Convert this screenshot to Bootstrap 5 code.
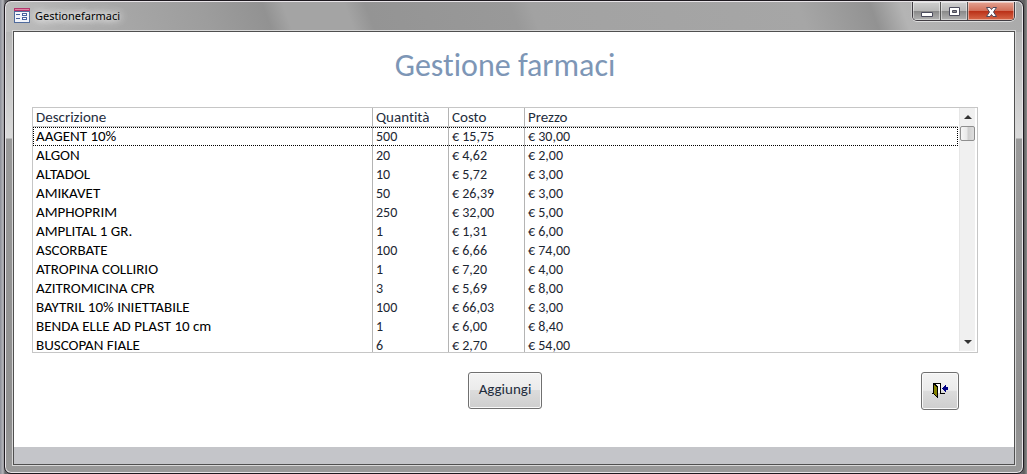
<!DOCTYPE html>
<html lang="it">
<head>
<meta charset="utf-8">
<meta name="viewport" content="width=device-width, initial-scale=1">
<title>Gestionefarmaci</title>
<link href="https://cdn.jsdelivr.net/npm/bootstrap@5.3.0/dist/css/bootstrap.min.css" rel="stylesheet">
<style>
body{background:linear-gradient(90deg,#8b8e98 0,#b5b5ba 3px,#66666a 5px,#66666a calc(100% - 5px),#5c5c5c calc(100% - 3px),#8a8a8a);font-family:Calibri,Carlito,Lato,sans-serif;font-size:15px;line-height:19px;color:#000;font-variant-ligatures:none}
.win{margin:0 3px 0 4px;border:1px solid #1e1a20;border-radius:7px;box-shadow:inset 0 0 0 1px #e8e4e8;padding:1px 8px 8px;
background:
 linear-gradient(180deg,transparent 31px,#b6b6b6 31px,#dadada 137px,#999 138px,#8f8f8f 420px,#999 100%) 0 0/14px 100% no-repeat,
 linear-gradient(180deg,transparent 31px,#b6b6b6 31px,#dadada 137px,#999 138px,#8f8f8f 420px,#999 100%) 100% 0/14px 100% no-repeat,
 linear-gradient(70deg,#bebebe 0,#a9a9a9 10%,#9d9d9d 20%,#929292 26%,#a4a4a4 28%,#a4a4a4 34%,#949494 36%,#999 50%,#9b9b9b 50.5%,#a2a2a2 52%,#a6a6a6 78%,#929292 85%,#b4b4b4 88%,#aaa 100%) 0 0/100% 32px no-repeat,
 #999}
.title-bar{height:29px}
.caption{font-family:"Noto Sans","Open Sans",sans-serif;font-size:11px;line-height:19px;padding-top:4px;padding-left:1px;gap:5px}
.caption span{text-shadow:0 0 6px #fff,0 0 10px #fff,0 0 14px #eee}
.win-buttons{height:19px;border:1px solid #403c42;border-top:0;border-radius:0 0 5px 5px;box-shadow:0 1px 0 #ddd,1px 0 0 #ddd,-1px 0 0 #ccc;overflow:hidden}
.win-buttons button{border:0;padding:0;width:27px;background:linear-gradient(#cfcfcf 0,#b8b8b8 48%,#888 50%,#b2b2b2 100%);box-shadow:inset 0 0 0 1px #ffffff70}
.win-buttons button+button{border-left:1px solid #555}
.win-buttons .win-close{width:47px;background:linear-gradient(#e3a292 0,#d2705a 48%,#b92f16 50%,#d8694a 100%)}
.win-buttons svg,.exit svg,.scroll svg{display:block;margin:auto}
.client{border:1px solid #505050;background:#fff;box-shadow:0 0 0 1px #d8d8d8}
.form-area{padding:15px 36px 37px 18px}
h1{font-size:32px;line-height:38px;color:#7d96b6;margin:0 0 22px;text-align:center;font-weight:400}
.list{height:246px;border:1px solid #c6c6c6;overflow:hidden}
.data{border-collapse:separate;border-spacing:0;table-layout:fixed;width:100%}
.data th,.data td{padding:0 3px;font-weight:400;white-space:nowrap}
.data th{color:#1f2d3d;border-bottom:1px solid #c6c6c6;line-height:18px}
.data td:not(:first-child){color:#1c2632;font-size:14px}
.data th+th,.data td+td{border-left:1px solid #b4b4b4}
.data .focused{outline:1px dotted #000;outline-offset:-1px}
.col-desc{width:339px}.col-num{width:76px}
.scroll{flex:0 0 16px;margin:0 2px 1px 1px;background:#f0f0f0;border-left:1px solid #e6e6e6}
.scroll button{border:0;background:none;padding:0;height:18px}
.thumb{height:15px;border:1px solid #8f8f8f;border-radius:2px;background:linear-gradient(90deg,#f6f6f6,#e9e9e9 45%,#cfcfcf 55%,#dedede)}
.actions{display:grid;grid-template-columns:1fr auto 1fr;padding:19px 19px 0 19px}
.face{height:37px;border:1px solid #707070;border-radius:3px;background:linear-gradient(#f3f3f3 0,#ebebeb 48%,#dcdcdc 50%,#cecece 100%);box-shadow:inset 0 0 0 1px #fafafa;color:#1f2d3d;padding:0 0 2px}
.add{width:74px}
.exit{width:38px;height:38px;justify-self:end}
.foot{height:17px;background:#c4c5c9}
</style>
<script src="https://cdn.jsdelivr.net/npm/bootstrap@5.3.0/dist/js/bootstrap.bundle.min.js"></script>
</head>
<body>
<div class="win">
  <header class="title-bar d-flex justify-content-between align-items-start">
    <div class="caption d-flex align-items-center">
      <svg width="16" height="15" viewBox="0 0 16 15" shape-rendering="crispEdges"><path fill="#4f6a9c" d="M0 3h16v12H0z"/><path fill="#f2f4fa" d="M1 4h14v10H1z"/><path fill="#b3356c" d="M0 0h16v3H0z"/><path fill="#df86a6" d="M1 1h14v1H1z"/><path fill="#4560a0" d="M2 6h4v1H2zM2 10h4v1H2zM8 5h5v3H8zM8 9h5v3H8z"/><path fill="#fff" d="M9 6h3v1H9zM9 10h3v1H9z"/></svg>
      <span>Gestionefarmaci</span>
    </div>
    <div class="win-buttons d-flex">
      <button type="button" aria-label="Riduci a icona"><svg width="13" height="17" viewBox="0 0 13 17"><path fill="#fff" stroke="#4b4b5c" d="M1.500 9.500h11v4h-11z"/></svg></button>
      <button type="button" aria-label="Ingrandisci"><svg width="13" height="17" viewBox="0 0 13 17"><path fill="#fff" fill-rule="evenodd" stroke="#4b4b5c" d="M1.500 4.500h10v8h-10zM4.500 7.500v2h4v-2z"/></svg></button>
      <button type="button" class="win-close" aria-label="Chiudi"><svg width="13" height="17" viewBox="0 0 13 17"><path fill="#fff" stroke="#50495a" d="M1.500 4.500h3.500l1.500 2 1.500-2h3.500L8.500 9 11.500 13.500H8L6.500 11.500 5 13.500H1.500l3-4.500z"/></svg></button>
    </div>
  </header>
  <main class="client">
    <div class="form-area">
      <h1>Gestione farmaci</h1>
      <div class="list d-flex">
        <div class="flex-grow-1">
          <table class="data">
            <colgroup><col class="col-desc"><col class="col-num"><col class="col-num"><col></colgroup>
            <thead><tr><th>Descrizione</th><th>Quantità</th><th>Costo</th><th>Prezzo</th></tr></thead>
            <tbody>
              <tr class="focused"><td>AAGENT 10%</td><td>500</td><td>€ 15,75</td><td>€ 30,00</td></tr>
              <tr><td>ALGON</td><td>20</td><td>€ 4,62</td><td>€ 2,00</td></tr>
              <tr><td>ALTADOL</td><td>10</td><td>€ 5,72</td><td>€ 3,00</td></tr>
              <tr><td>AMIKAVET</td><td>50</td><td>€ 26,39</td><td>€ 3,00</td></tr>
              <tr><td>AMPHOPRIM</td><td>250</td><td>€ 32,00</td><td>€ 5,00</td></tr>
              <tr><td>AMPLITAL 1 GR.</td><td>1</td><td>€ 1,31</td><td>€ 6,00</td></tr>
              <tr><td>ASCORBATE</td><td>100</td><td>€ 6,66</td><td>€ 74,00</td></tr>
              <tr><td>ATROPINA COLLIRIO</td><td>1</td><td>€ 7,20</td><td>€ 4,00</td></tr>
              <tr><td>AZITROMICINA CPR</td><td>3</td><td>€ 5,69</td><td>€ 8,00</td></tr>
              <tr><td>BAYTRIL 10% INIETTABILE</td><td>100</td><td>€ 66,03</td><td>€ 3,00</td></tr>
              <tr><td>BENDA ELLE AD PLAST 10 cm</td><td>1</td><td>€ 6,00</td><td>€ 8,40</td></tr>
              <tr><td>BUSCOPAN FIALE</td><td>6</td><td>€ 2,70</td><td>€ 54,00</td></tr>
            </tbody>
          </table>
        </div>
        <div class="scroll d-flex flex-column">
          <button type="button" aria-label="Scorri in alto"><svg width="8" height="4" viewBox="0 0 8 4"><path fill="#333" d="M0 4l4-4 4 4z"/></svg></button>
          <div class="thumb"></div>
          <button type="button" class="mt-auto" aria-label="Scorri in basso"><svg width="8" height="4" viewBox="0 0 8 4"><path fill="#333" d="M0 0l4 4 4-4z"/></svg></button>
        </div>
      </div>
      <div class="actions">
        <span></span>
        <button type="button" class="face add">Aggiungi</button>
        <button type="button" class="face exit" aria-label="Esci"><svg width="16" height="16" viewBox="0 0 16 16" shape-rendering="crispEdges"><path fill="#000" d="M1 1h8v1H1zM8 1h1v10H8zM0 11h2v1H0zM8 11h5v1H8z"/><path fill="#000" d="M1 1h1l1 1 3 2v12H5l-4-4z"/><path fill="#fff" d="M4 2h4v9H6V4z"/><path fill="#848200" d="M2 3h1v1h1v1h1v9H4v-1H3v-1H2z"/><path fill="#000084" d="M10 6h1V5h1V4h1V3h1v2h2v3h-2v2h-1V9h-1V8h-1V7h-1z"/></svg></button>
      </div>
    </div>
    <div class="foot"></div>
  </main>
</div>
</body>
</html>
